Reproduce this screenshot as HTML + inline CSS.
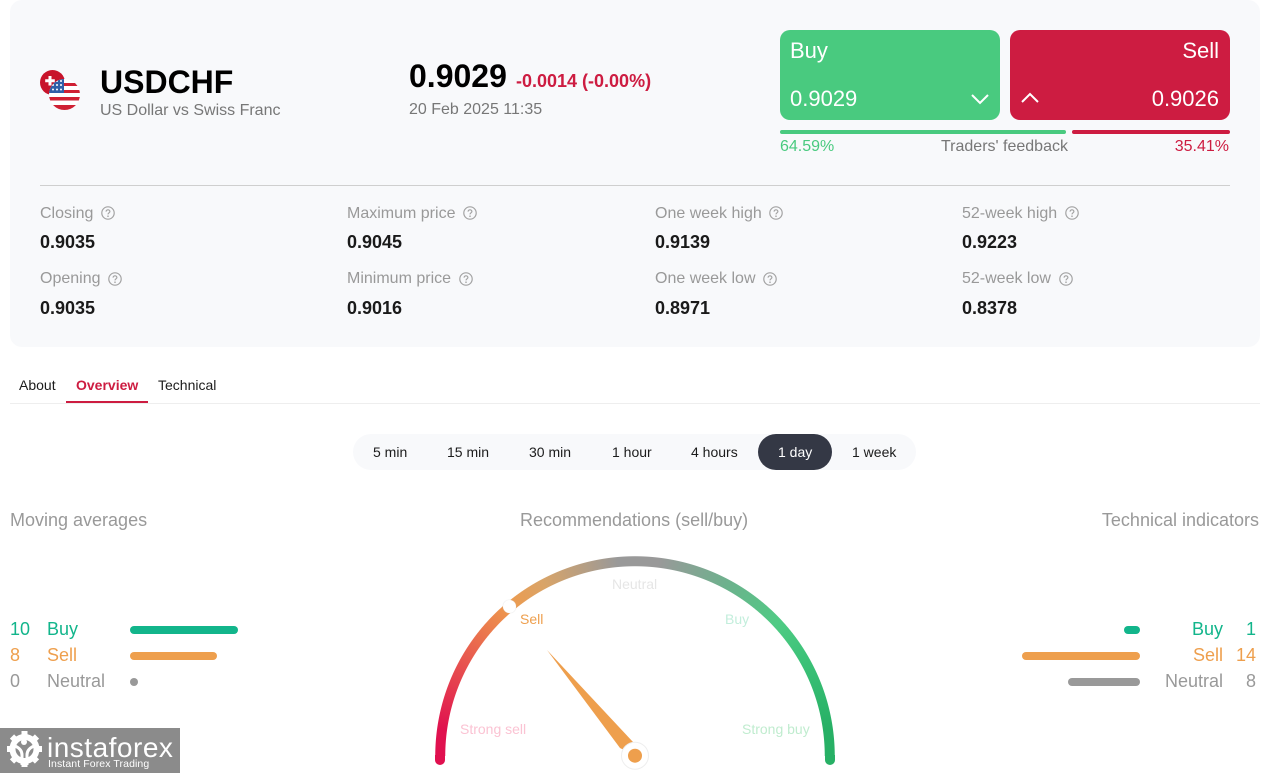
<!DOCTYPE html>
<html><head><meta charset="utf-8">
<style>
html,body{margin:0;padding:0;background:#fff;overflow:hidden;width:1266px;height:773px}
body{position:relative;font-family:"Liberation Sans",sans-serif}
#w{position:absolute;left:0;top:0;width:1266px;height:773px;overflow:hidden}
.t{position:absolute;white-space:nowrap;line-height:1}
.b{position:absolute}
.r{text-align:right}
.l{font-size:16px;color:#999}
.v{font-size:18px;font-weight:bold;color:#1a1a1a}
.q{position:absolute;width:14px;height:14px}
.tf{font-size:14px;color:#1c1c1c;top:445px}
.h{font-size:18px;color:#999;top:511px}
.ll{font-size:18px}
</style></head><body><div id="w">
<div class="b" style="left:10px;top:0;width:1250px;height:347px;background:#f8f9fb;border-radius:12px"></div>

<svg class="b" style="left:38px;top:68px" width="44" height="44" viewBox="0 0 44 44">
<defs><clipPath id="u"><circle cx="26.5" cy="26.5" r="15.500"/></clipPath></defs>
<circle cx="14.5" cy="14.5" r="12.5" fill="#c8142b"/>
<path d="M10.500 8h3v3.200h3.300v3h-3.300v3.300h-3v-3.300H7.200v-3h3.300z" fill="#fff"/>
<g clip-path="url(#u)">
<rect x="11" y="11" width="32" height="32" fill="#fff"/>
<rect x="11" y="15" width="32" height="3" fill="#cf2033"/>
<rect x="11" y="22" width="32" height="3" fill="#cf2033"/>
<rect x="11" y="29" width="32" height="3.500" fill="#cf2033"/>
<rect x="11" y="37" width="32" height="6" fill="#cf2033"/>
<rect x="11" y="11" width="15" height="14" fill="#2f5fa8"/>
<g fill="#fff"><circle cx="15" cy="17" r="1"/><circle cx="19" cy="17" r="1"/><circle cx="23" cy="17" r="1"/><circle cx="15" cy="21.500" r="1"/><circle cx="19" cy="21.500" r="1"/><circle cx="23" cy="21.500" r="1"/><circle cx="19" cy="13" r="1"/><circle cx="23" cy="13" r="1"/></g>
</g>
</svg>

<div class="t" style="left:100px;top:66px;font-size:32px;font-weight:bold;color:#000">USDCHF</div>
<div class="t" style="left:100px;top:103px;font-size:16px;color:#777">US Dollar vs Swiss Franc</div>

<div class="t" style="left:409px;top:60px;font-size:32px;font-weight:bold;color:#000">0.9029</div>
<div class="t" style="left:516px;top:72px;font-size:18px;font-weight:bold;color:#cd1c41">-0.0014 (-0.00%)</div>
<div class="t" style="left:409px;top:102px;font-size:16px;color:#777">20 Feb 2025 11:35</div>

<div class="b" style="left:780px;top:30px;width:220px;height:90px;background:#49ca7f;border-radius:10px"></div>
<div class="b" style="left:1010px;top:30px;width:220px;height:90px;background:#cd1c41;border-radius:10px"></div>
<div class="t" style="left:790px;top:40px;font-size:22px;color:#fff">Buy</div>
<div class="t" style="left:790px;top:88px;font-size:22px;color:#fff">0.9029</div>
<div class="t r" style="right:47px;top:40px;font-size:22px;color:#fff">Sell</div>
<div class="t r" style="right:47px;top:88px;font-size:22px;color:#fff">0.9026</div>
<svg class="b" style="left:970px;top:92px" width="20" height="14"><path d="M2 3l8 8 8-8" fill="none" stroke="#fff" stroke-width="2"/></svg>
<svg class="b" style="left:1020px;top:91px" width="20" height="14"><path d="M2 11l8-8 8 8" fill="none" stroke="#fff" stroke-width="2"/></svg>
<div class="b" style="left:780px;top:130px;width:286px;height:4px;background:#49ca7f;border-radius:2px"></div>
<div class="b" style="left:1072px;top:130px;width:158px;height:4px;background:#cd1c41;border-radius:2px"></div>
<div class="t" style="left:780px;top:139px;font-size:16px;color:#49ca7f">64.59%</div>
<div class="t" style="left:941px;top:139px;font-size:16px;color:#777">Traders' feedback</div>
<div class="t r" style="right:37px;top:139px;font-size:16px;color:#cd1c41">35.41%</div>

<div class="b" style="left:40px;top:185px;width:1190px;height:1px;background:#cfcfcf"></div>

<svg width="0" height="0" style="position:absolute;left:0;top:0"><defs><g id="q"><circle cx="7" cy="7" r="6.200" fill="none" stroke="#a3a3a3" stroke-width="1.200"/><path d="M5.100 5.600c0-1.100.9-1.800 1.900-1.800s1.900.7 1.900 1.700c0 1.300-1.900 1.400-1.900 2.900" fill="none" stroke="#a3a3a3" stroke-width="1.200"/><circle cx="7" cy="10.200" r=".8" fill="#a3a3a3"/></g></defs></svg>

<div class="t l" style="left:40px;top:206px">Closing</div><svg class="q" style="left:101px;top:206px"><use href="#q"/></svg>
<div class="t v" style="left:40px;top:233px">0.9035</div>
<div class="t l" style="left:40px;top:271px">Opening</div><svg class="q" style="left:108px;top:272px"><use href="#q"/></svg>
<div class="t v" style="left:40px;top:299px">0.9035</div>

<div class="t l" style="left:347px;top:206px">Maximum price</div><svg class="q" style="left:463px;top:206px"><use href="#q"/></svg>
<div class="t v" style="left:347px;top:233px">0.9045</div>
<div class="t l" style="left:347px;top:271px">Minimum price</div><svg class="q" style="left:459px;top:272px"><use href="#q"/></svg>
<div class="t v" style="left:347px;top:299px">0.9016</div>

<div class="t l" style="left:655px;top:206px">One week high</div><svg class="q" style="left:769px;top:206px"><use href="#q"/></svg>
<div class="t v" style="left:655px;top:233px">0.9139</div>
<div class="t l" style="left:655px;top:271px">One week low</div><svg class="q" style="left:763px;top:272px"><use href="#q"/></svg>
<div class="t v" style="left:655px;top:299px">0.8971</div>

<div class="t l" style="left:962px;top:206px">52-week high</div><svg class="q" style="left:1065px;top:206px"><use href="#q"/></svg>
<div class="t v" style="left:962px;top:233px">0.9223</div>
<div class="t l" style="left:962px;top:271px">52-week low</div><svg class="q" style="left:1059px;top:272px"><use href="#q"/></svg>
<div class="t v" style="left:962px;top:299px">0.8378</div>

<div class="t" style="left:19px;top:378px;font-size:14px;color:#1c1c1c">About</div>
<div class="t" style="left:76px;top:378px;font-size:14px;font-weight:bold;color:#cd1c41">Overview</div>
<div class="t" style="left:158px;top:378px;font-size:14px;color:#1c1c1c">Technical</div>
<div class="b" style="left:10px;top:403px;width:1250px;height:1px;background:#eee"></div>
<div class="b" style="left:66px;top:401px;width:82px;height:2px;background:#cd1c41"></div>

<div class="b" style="left:353px;top:434px;width:563px;height:36px;background:#f8f9fb;border-radius:18px"></div>
<div class="b" style="left:758px;top:434px;width:74px;height:36px;background:#343845;border-radius:18px"></div>
<div class="t tf" style="left:373px">5 min</div>
<div class="t tf" style="left:447px">15 min</div>
<div class="t tf" style="left:529px">30 min</div>
<div class="t tf" style="left:612px">1 hour</div>
<div class="t tf" style="left:691px">4 hours</div>
<div class="t tf" style="left:778px;color:#fff">1 day</div>
<div class="t tf" style="left:852px">1 week</div>

<div class="t h" style="left:10px">Moving averages</div>
<div class="t h" style="left:520px">Recommendations (sell/buy)</div>
<div class="t h r" style="right:7px">Technical indicators</div>

<div class="t ll" style="left:10px;top:620px;color:#12b58b">10</div>
<div class="t ll" style="left:47px;top:620px;color:#12b58b">Buy</div>
<div class="b" style="left:130px;top:626px;width:108px;height:8px;background:#12b58b;border-radius:4px"></div>
<div class="t ll" style="left:10px;top:646px;color:#ee9f4d">8</div>
<div class="t ll" style="left:47px;top:646px;color:#ee9f4d">Sell</div>
<div class="b" style="left:130px;top:652px;width:87px;height:8px;background:#ee9f4d;border-radius:4px"></div>
<div class="t ll" style="left:10px;top:672px;color:#999">0</div>
<div class="t ll" style="left:47px;top:672px;color:#999">Neutral</div>
<div class="b" style="left:130px;top:678px;width:8px;height:8px;background:#999;border-radius:4px"></div>

<div class="b" style="left:1124px;top:626px;width:16px;height:8px;background:#12b58b;border-radius:4px"></div>
<div class="t ll r" style="right:43px;top:620px;color:#12b58b">Buy</div>
<div class="t ll r" style="right:10px;top:620px;color:#12b58b">1</div>
<div class="b" style="left:1022px;top:652px;width:118px;height:8px;background:#ee9f4d;border-radius:4px"></div>
<div class="t ll r" style="right:43px;top:646px;color:#ee9f4d">Sell</div>
<div class="t ll r" style="right:10px;top:646px;color:#ee9f4d">14</div>
<div class="b" style="left:1068px;top:678px;width:72px;height:8px;background:#999;border-radius:4px"></div>
<div class="t ll r" style="right:43px;top:672px;color:#999">Neutral</div>
<div class="t ll r" style="right:10px;top:672px;color:#999">8</div>

<div class="b" style="left:435px;top:556px;width:400px;height:200px;background:conic-gradient(from 270deg at 50% 100%,#e0104f 0deg,#e0124f 8deg,#e8594f 30deg,#ee9a4d 50deg,#d9a468 62deg,#999 85deg,#999 97deg,#6db18d 118deg,#4fcb84 137deg,#3cc278 150deg,#27b065 172deg,#27b065 180deg,#e0104f 180deg);-webkit-mask:radial-gradient(circle at 50% 100%,transparent 189.500px,#000 190px,#000 199.500px,transparent 200px);mask:radial-gradient(circle at 50% 100%,transparent 189.500px,#000 190px,#000 199.500px,transparent 200px)"></div>
<div class="b" style="left:435px;top:755px;width:10px;height:10px;background:#e0104f;border-radius:0 0 5px 5px"></div>
<div class="b" style="left:825px;top:755px;width:10px;height:10px;background:#27b065;border-radius:0 0 5px 5px"></div>
<div class="b" style="left:503px;top:600px;width:13px;height:13px;background:#fff;border-radius:50%;box-shadow:0 0 1px #ccc"></div>

<div class="t" style="left:612px;top:577px;font-size:14px;color:#e6e6e6">Neutral</div>
<div class="t" style="left:520px;top:612px;font-size:14px;color:#ee9f4d">Sell</div>
<div class="t" style="left:725px;top:612px;font-size:14px;color:#c3eedc">Buy</div>
<div class="t" style="left:460px;top:722px;font-size:14px;color:#fbc3d3">Strong sell</div>
<div class="t" style="left:742px;top:722px;font-size:14px;color:#c0eccf">Strong buy</div>

<svg class="b" style="left:530px;top:640px" width="125" height="133">
<polygon points="17,10 103,102 110,110 98,112 90,108" fill="#ee9f4d"/>
<circle cx="105" cy="115.700" r="13.500" fill="#fff" stroke="#eee" stroke-width="1"/>
<circle cx="105" cy="115.700" r="7" fill="#ee9f4d"/>
</svg>

<div class="b" style="left:0;top:728px;width:180px;height:45px;background:#8b8b8b"></div>
<svg class="b" style="left:5px;top:729px" width="40" height="42" viewBox="0 0 40 42">
<circle cx="19.500" cy="20" r="12" fill="none" stroke="#fff" stroke-width="6"/>
<g stroke="#fff" stroke-width="6"><path d="M19.500 2v5M19.500 33v5M2 20h5M32 20h5M7 7.500l4 4M32 7.500l-4 4M7 32.500l4-4M32 32.500l-4-4"/></g>
<path d="M10 17Q17 20 17 26V36M29 17Q22 20 22 26V36" fill="none" stroke="#fff" stroke-width="3"/>
<circle cx="19" cy="13" r="3" fill="#fff"/>
</svg>
<div class="t" style="left:47px;top:734px;font-size:28px;color:#fff;letter-spacing:.5px">instaforex</div>
<div class="t" style="left:48px;top:759px;font-size:10.5px;color:#fff;letter-spacing:.1px">Instant Forex Trading</div>
</div></body></html>
